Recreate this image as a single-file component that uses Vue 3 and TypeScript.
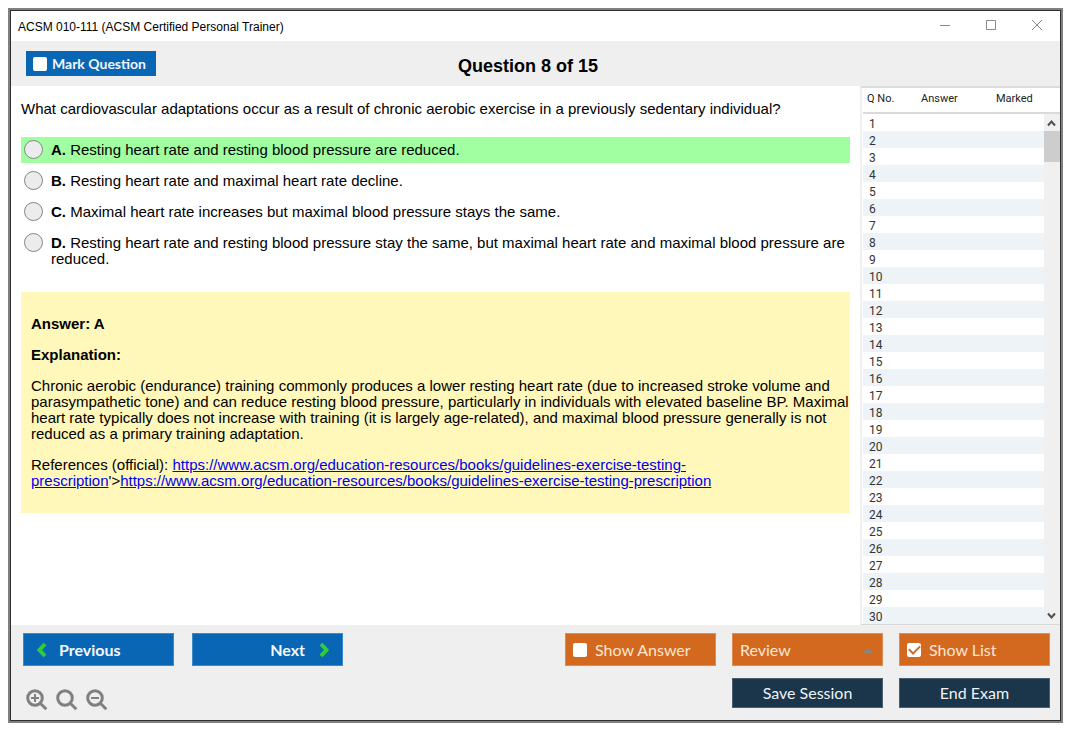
<script setup lang="ts">
import { ref } from 'vue'

interface Choice {
  letter: string
  text: string
}

const choices: Choice[] = [
  { letter: 'A', text: 'Resting heart rate and resting blood pressure are reduced.' },
  { letter: 'B', text: 'Resting heart rate and maximal heart rate decline.' },
  { letter: 'C', text: 'Maximal heart rate increases but maximal blood pressure stays the same.' },
  {
    letter: 'D',
    text: 'Resting heart rate and resting blood pressure stay the same, but maximal heart rate and maximal blood pressure are reduced.',
  },
]

const correct = 'A'
const picked = ref<string>('')
const marked = ref<boolean>(false)
const showAnswer = ref<boolean>(false)
const showList = ref<boolean>(true)
const review = ref<string>('Review')
const questionNumbers: number[] = Array.from({ length: 30 }, (_, i) => i + 1)
</script>

<template>
  <div class="window">
    <header class="titlebar">
      <span class="title">ACSM 010-111 (ACSM Certified Personal Trainer)</span>
      <div class="controls">
        <button type="button" aria-label="Minimize">
          <svg width="12" height="12" viewBox="0 0 12 12"><path d="M1 5.500H11" /></svg>
        </button>
        <button type="button" aria-label="Maximize">
          <svg width="12" height="12" viewBox="0 0 12 12"><path d="M1.500 0.500H10.500V9.500H1.500Z" /></svg>
        </button>
        <button type="button" aria-label="Close">
          <svg width="12" height="12" viewBox="0 0 12 12"><path d="M1 0L11 10M11 0L1 10" /></svg>
        </button>
      </div>
    </header>

    <div class="toolbar">
      <label class="mark"><input v-model="marked" type="checkbox" class="tick" />Mark Question</label>
      <h1>Question 8 of 15</h1>
      <span></span>
    </div>

    <div class="body">
      <main class="content">
        <p class="question">
          What cardiovascular adaptations occur as a result of chronic aerobic exercise in a previously sedentary individual?
        </p>
        <div class="choices">
          <label
            v-for="choice in choices"
            :key="choice.letter"
            class="choice"
            :class="{ correct: choice.letter === correct }"
          >
            <input v-model="picked" type="radio" name="choice" :value="choice.letter" />
            <span><b>{{ choice.letter }}.</b> {{ choice.text }}</span>
          </label>
        </div>
        <section class="explanation">
          <p><b>Answer: A</b></p>
          <p><b>Explanation:</b></p>
          <p>
            Chronic aerobic (endurance) training commonly produces a lower resting heart rate (due to increased stroke
            volume and parasympathetic tone) and can reduce resting blood pressure, particularly in individuals with
            elevated baseline BP. Maximal heart rate typically does not increase with training (it is largely
            age-related), and maximal blood pressure generally is not reduced as a primary training adaptation.
          </p>
          <p>
            References (official):
            <a href="#">https://www.acsm.org/education-resources/books/guidelines-exercise-testing-prescription</a>'&gt;<a
              href="#"
              >https://www.acsm.org/education-resources/books/guidelines-exercise-testing-prescription</a
            >
          </p>
        </section>
      </main>

      <aside v-if="showList" class="list">
        <div class="grid">
          <table>
            <thead>
              <tr>
                <th class="number">Q No.</th>
                <th class="answer">Answer</th>
                <th>Marked</th>
              </tr>
            </thead>
            <tbody>
              <tr v-for="n in questionNumbers" :key="n">
                <td>{{ n }}</td>
                <td></td>
                <td></td>
              </tr>
            </tbody>
          </table>
        </div>
        <div class="scrollbar">
          <button type="button" aria-label="Scroll up">
            <svg width="9" height="8" viewBox="0 0 9 8"><path d="M1 6.500L4.500 2.500L8 6.500" /></svg>
          </button>
          <div class="thumb"></div>
          <button type="button" class="down" aria-label="Scroll down">
            <svg width="9" height="8" viewBox="0 0 9 8"><path d="M1 1.500L4.500 5.500L8 1.500" /></svg>
          </button>
        </div>
      </aside>
    </div>

    <footer class="footer">
      <div class="left">
        <div class="pair">
          <button type="button" class="btn blue previous">
            <svg width="12" height="16" viewBox="0 0 12 16"><path d="M9 2L3.500 8L9 14" /></svg>
            Previous
          </button>
          <button type="button" class="btn blue next">
            Next
            <svg width="12" height="16" viewBox="0 0 12 16"><path d="M3 2L8.500 8L3 14" /></svg>
          </button>
        </div>
        <div class="zooms">
          <button type="button" aria-label="Zoom in">
            <svg width="22" height="22" viewBox="0 0 22 22">
              <circle cx="9" cy="9" r="7.300" />
              <path d="M14.300 14.300L20.300 20.300" />
              <path class="sign" d="M5 9H13M9 5V13" />
            </svg>
          </button>
          <button type="button" aria-label="Reset zoom">
            <svg width="22" height="22" viewBox="0 0 22 22">
              <circle cx="9" cy="9" r="7.300" />
              <path d="M14.300 14.300L20.300 20.300" />
            </svg>
          </button>
          <button type="button" aria-label="Zoom out">
            <svg width="22" height="22" viewBox="0 0 22 22">
              <circle cx="9" cy="9" r="7.300" />
              <path d="M14.300 14.300L20.300 20.300" />
              <path class="sign" d="M5 9H13" />
            </svg>
          </button>
        </div>
      </div>

      <div class="right">
        <label class="btn orange"><input v-model="showAnswer" type="checkbox" class="tick" />Show Answer</label>
        <div class="review">
          <select v-model="review" class="btn orange" aria-label="Review">
            <option>Review</option>
          </select>
          <svg width="10" height="6" viewBox="0 0 10 6"><path d="M5 0L10 6H0Z" /></svg>
        </div>
        <label class="btn orange"><input v-model="showList" type="checkbox" class="tick" />Show List</label>
        <button type="button" class="btn navy save">Save Session</button>
        <button type="button" class="btn navy">End Exam</button>
      </div>
    </footer>
  </div>
</template>

<style>
body {
  background: #fff;
}
</style>

<style scoped>
* {
  box-sizing: border-box;
}

button {
  padding: 0;
  border: 0;
  background: none;
  font: inherit;
  color: inherit;
}

svg {
  display: block;
  fill: none;
}

.window {
  display: flex;
  flex-direction: column;
  min-height: calc(100vh - 20px);
  margin: 8px 12px 12px 8px;
  border: 2px solid #808080;
  outline: 1px solid #303030;
  outline-offset: -3px;
  padding: 1px;
  background: #fff;
  color: #000;
  font: 15px/16px 'Liberation Sans', Arial, sans-serif;
}

.titlebar {
  display: flex;
  align-items: center;
  justify-content: space-between;
  height: 30px;
  padding: 0 0 0 7px;
  font-size: 12px;
}

.title {
  padding-top: 2px;
}

.controls {
  display: flex;
}

.controls button {
  display: flex;
  align-items: center;
  justify-content: center;
  width: 46px;
  height: 30px;
}

.controls svg {
  stroke: #8a8a8a;
  stroke-width: 1;
}

.toolbar {
  display: grid;
  grid-template-columns: 1fr auto 1fr;
  align-items: center;
  height: 45px;
  padding: 0 30px 0 15px;
  background: #efefef;
}

.toolbar h1 {
  margin: 4px 0 0;
  font-size: 18px;
  line-height: 20px;
}

.mark {
  display: flex;
  align-items: center;
  justify-self: start;
  gap: 5px;
  height: 25px;
  padding: 0 10px 0 7px;
  background: #0866b4;
  color: #f2f6fa;
  font: bold 14px/20px Lato, 'Open Sans', sans-serif;
}

.tick {
  display: grid;
  place-content: center;
  width: 14px;
  height: 14px;
  margin: 0;
  border-radius: 2px;
  appearance: none;
  background: #fff;
}

.tick:checked::before {
  content: '';
  width: 9px;
  height: 5px;
  margin-bottom: 3px;
  border: solid #d2691e;
  border-width: 0 0 2px 2px;
  transform: rotate(-45deg);
}

.body {
  display: flex;
  flex: 1;
}

.content {
  flex: 1;
  min-width: 0;
  padding: 15px 10px;
}

.question {
  margin: 0 0 20px;
}

.choices {
  display: grid;
  gap: 5px;
  margin-bottom: 20px;
}

.choice {
  display: flex;
  gap: 8px;
  padding: 5px 3px;
}

.choice.correct {
  background: #a1ffa1;
}

.choice input {
  flex: none;
  width: 19px;
  height: 19px;
  margin: -2px 0;
  border: 1px solid #858585;
  border-radius: 50%;
  appearance: none;
  background: #ececec;
}

.choice input:checked {
  background: radial-gradient(circle, #333 4px, #ececec 5px);
}

.explanation {
  padding: 24px 0 24px 10px;
  background: #fff8ba;
}

.explanation p {
  margin: 0 0 15px;
}

.explanation p:last-child {
  margin: 0;
}

.explanation a {
  color: #0000ee;
}

.list {
  display: flex;
  width: 200px;
  border-top: 2px solid #dcdcdc;
  border-bottom: 1px solid #d8d8d8;
  border-left: 2px solid #f0f0f0;
  font: 12px/14px Roboto, sans-serif;
}

.grid {
  flex: 1;
  padding-left: 1px;
}

table {
  width: 100%;
  border-collapse: separate;
  border-spacing: 0;
  table-layout: fixed;
  color: #333;
}

th {
  height: 26px;
  padding: 0 0 2px;
  border-bottom: 2px solid #dadada;
  color: #222;
  font-size: 11px;
  font-weight: 400;
  text-align: left;
}

th.number {
  width: 58px;
  padding-left: 4px;
}

th.answer {
  width: 75px;
}

td {
  height: 17px;
  padding: 3px 0 0 6px;
}

tbody tr:nth-child(even) {
  background: #eef3f8;
}

.scrollbar {
  display: flex;
  flex-direction: column;
  width: 16px;
  margin-top: 26px;
  background: #f0f0f0;
  box-shadow: 0 -2px #dadada;
}

.scrollbar button {
  display: grid;
  place-items: center;
  width: 15px;
  height: 17px;
}

.scrollbar .down {
  margin-top: auto;
}

.scrollbar svg {
  stroke: #505050;
  stroke-width: 2;
}

.thumb {
  height: 31px;
  background: #cdcdcd;
}

.footer {
  display: flex;
  justify-content: space-between;
  padding: 8px 10px 9px 12px;
  background: #efefef;
}

.pair {
  display: flex;
  gap: 18px;
}

.btn {
  display: flex;
  align-items: center;
  width: 151px;
  height: 33px;
  padding: 0 8px;
  border: 1px solid transparent;
  font: 16px/20px Lato, 'Open Sans', sans-serif;
}

.blue {
  gap: 11px;
  padding: 0 12px;
  border-color: #3d8ac8;
  background: #0866b4;
  color: #f4f8fc;
  font-weight: 700;
}

.blue svg {
  stroke: #2fce38;
  stroke-width: 4;
}

.next {
  justify-content: flex-end;
  gap: 13px;
}

.orange {
  gap: 8px;
  padding: 0 7px;
  border-color: #df8c51;
  background: #d2691e;
  color: #fbe6d6;
}

.navy {
  justify-content: center;
  height: 30px;
  border-color: #4a6072;
  background: #1b354a;
  color: #eef2f5;
}

.zooms {
  display: flex;
  gap: 8px;
  padding: 23px 0 0 3px;
}

.zooms svg {
  stroke: #808080;
  stroke-width: 3;
}

.zooms .sign {
  stroke-width: 2;
}

.right {
  display: grid;
  grid-template-columns: auto auto auto;
  align-content: start;
  gap: 12px 16px;
}

.save {
  grid-column: 2;
}

.review {
  position: relative;
}

.review select {
  margin: 0;
  border-radius: 0;
  appearance: none;
}

.review svg {
  position: absolute;
  top: 14px;
  right: 10px;
  fill: #8f8378;
  pointer-events: none;
}
</style>
